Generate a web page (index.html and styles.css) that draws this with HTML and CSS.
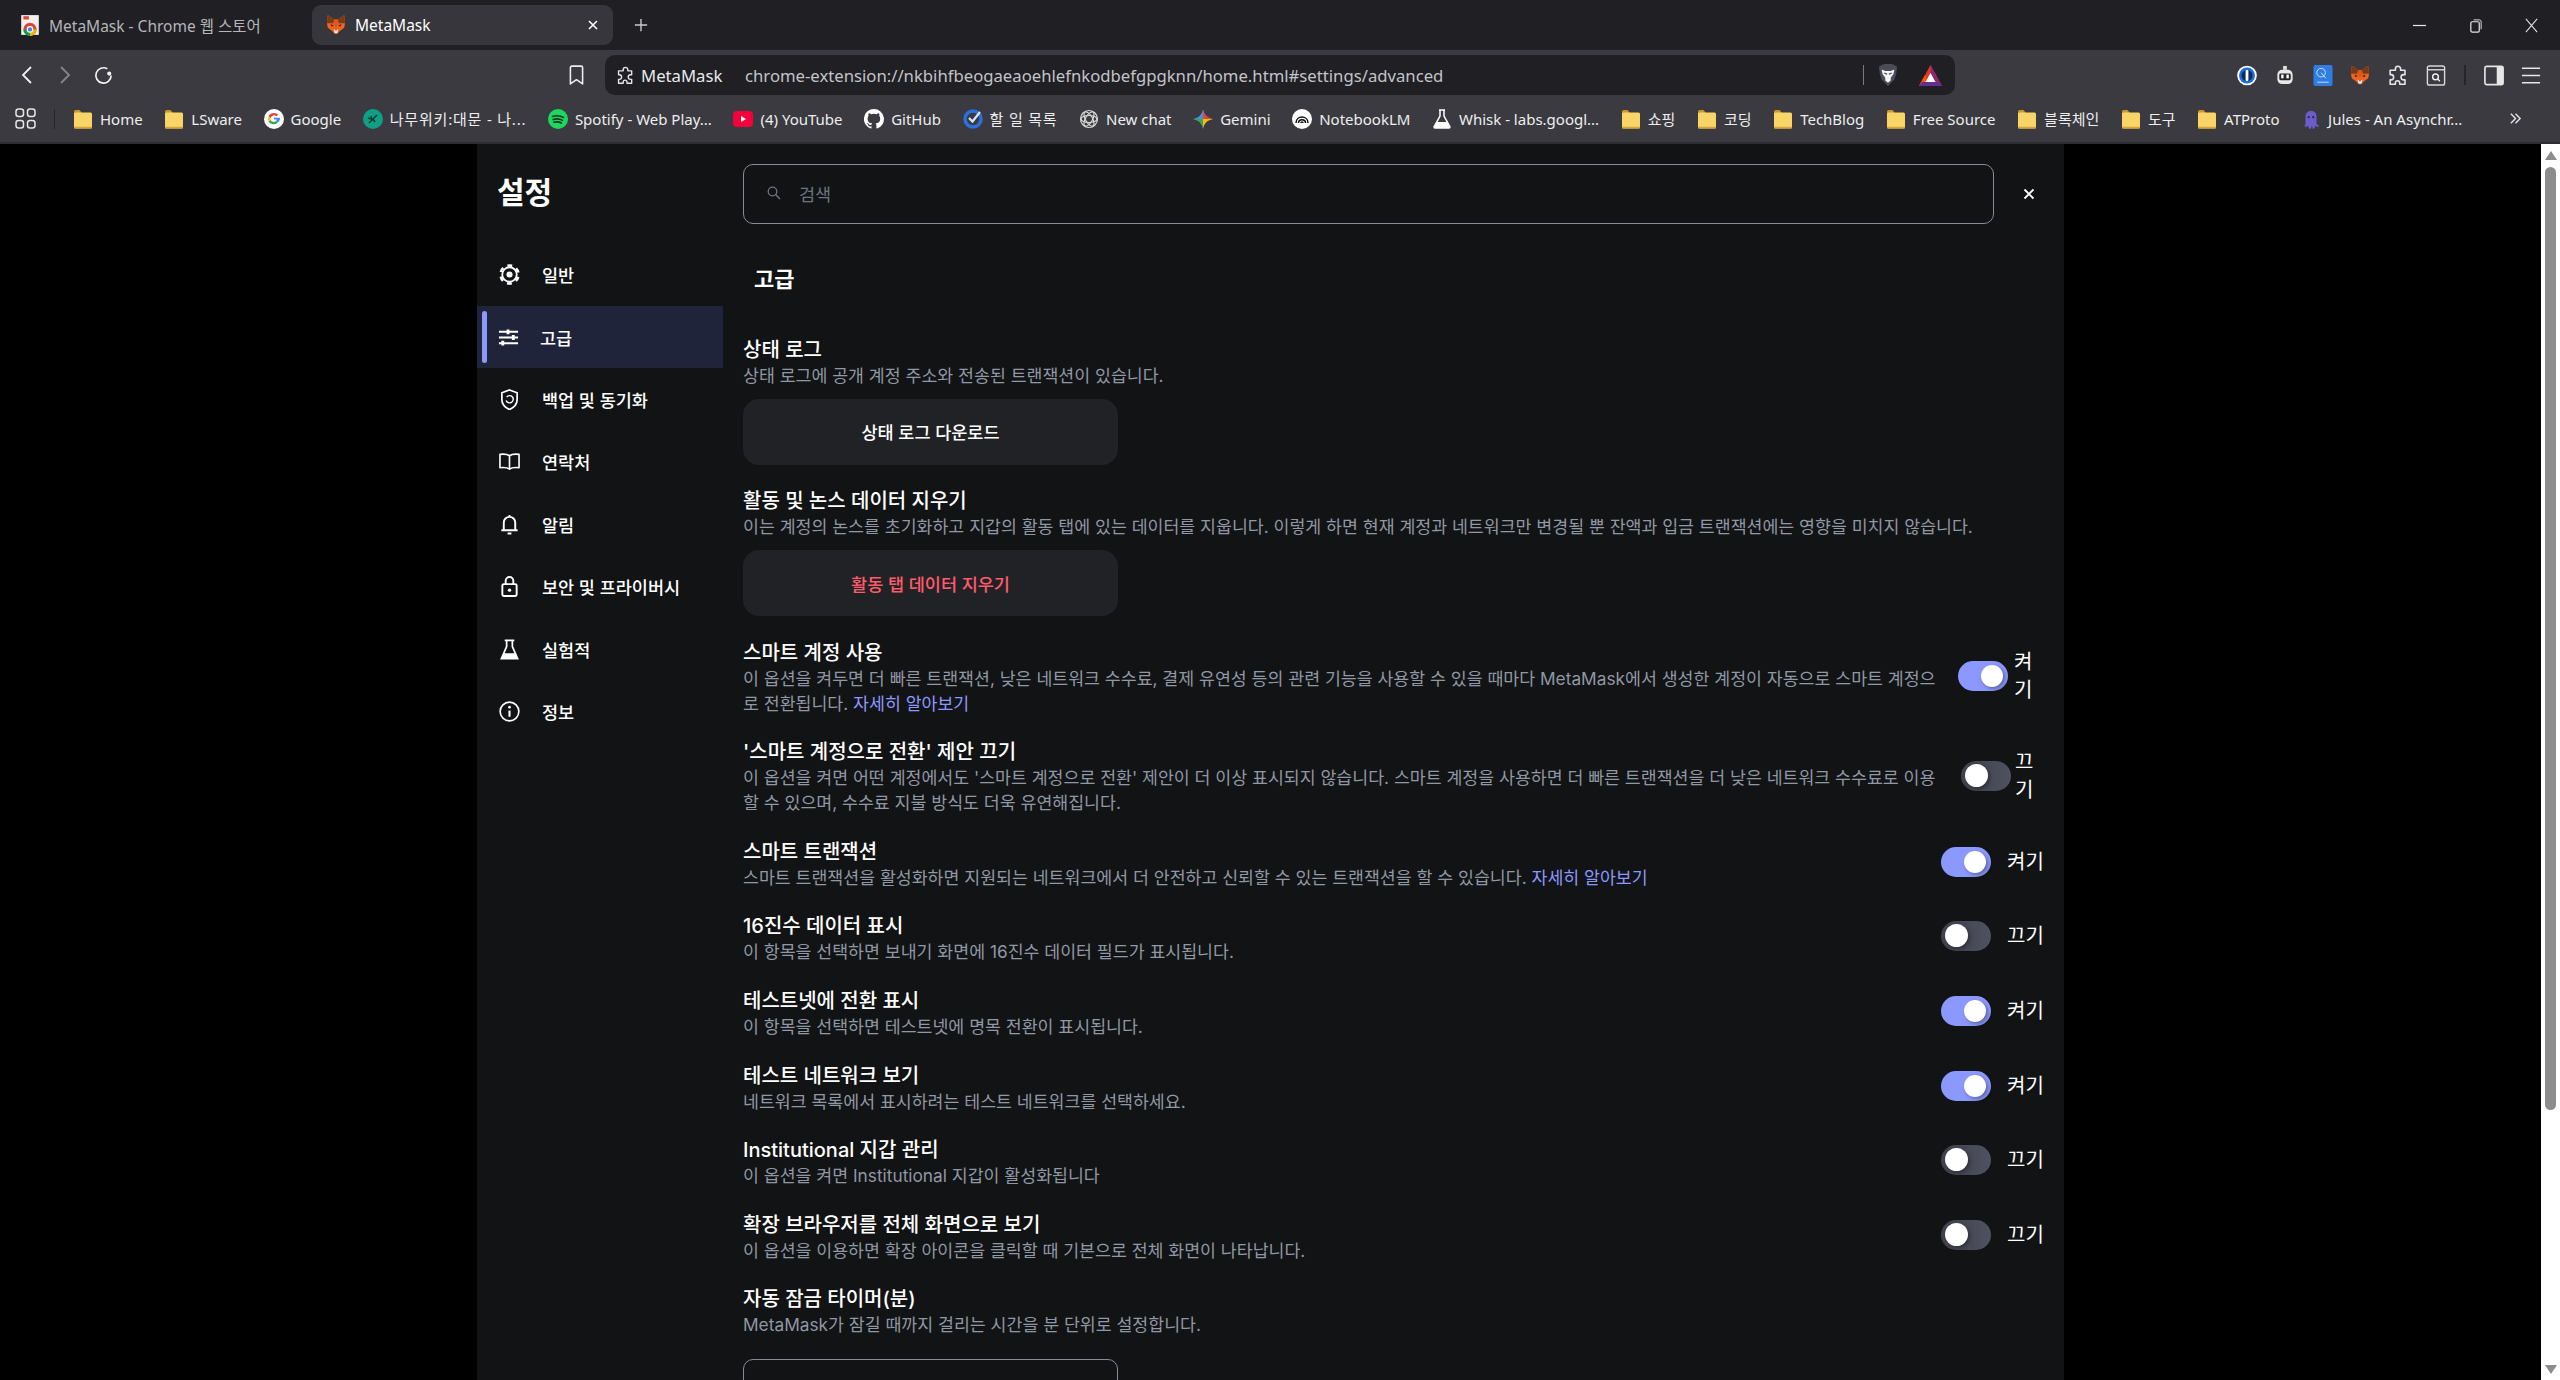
FILE: index.html
```html
<!DOCTYPE html>
<html lang="ko">
<head>
  <meta charset="UTF-8">
  <title>MetaMask</title>
  <link rel="stylesheet" href="styles.css">
</head>
<body>
  <!-- shared icons -->
  <svg class="defs" width="0" height="0">
    <symbol id="folder" viewBox="0 0 20 22">
      <path d="M1 3.5a1.5 1.5 0 0 1 1.5-1.500h4l2 2.500v3h-7.500z" fill="#c9962c"/>
      <rect x="1" y="4.500" width="18" height="16" rx="1.500" fill="#f9d568"/>
      <rect x="1" y="18.800" width="18" height="1.700" rx=".8" fill="#d6a53a"/>
    </symbol>
    <symbol id="fox" viewBox="0 0 22 22">
      <polygon points="2,0 9,5 13,5 20,0 21,9 20,14 15,18 12.500,20.500 9.500,20.500 7,18 2,14 1,9" fill="#f0641e"/>
      <polygon points="2,0 9,5 8,9 1,9" fill="#7a3a14"/>
      <polygon points="20,0 13,5 14,9 21,9" fill="#7a3a14"/>
      <polygon points="9,5 13,5 13.500,11 11,14 8.500,11" fill="#e2561b"/>
      <polygon points="5,10 8.500,11.500 6,13" fill="#2b2b33"/>
      <polygon points="17,10 13.500,11.500 16,13" fill="#2b2b33"/>
      <polygon points="8.500,16 13.500,16 12.500,20 9.500,20" fill="#efe3da"/>
      <polygon points="10,16 12,16 11,17.500" fill="#2b2b33"/>
    </symbol>
    <symbol id="puzzle" viewBox="0 0 22 24">
      <path d="M8 4.500a3 3 0 0 1 6 0V6h5v5h-1.500a3 3 0 0 0 0 6H19v5h-6v-1.500a2.500 2.500 0 0 0-5 0V22H2v-5h1a3 3 0 0 0 0-6H2V6h6z" fill="none" stroke="currentColor" stroke-width="1.800" stroke-linejoin="round"/>
    </symbol>
  </svg>

  <!-- Tab strip -->
  <div class="tabstrip">
    <div class="tab">
      <svg class="favicon" viewBox="0 0 18 20">
        <path d="M1 1h16v18H1z" fill="#f4f1ec"/>
        <path d="M3 2h5v3H3z" fill="#d9483b"/>
        <circle cx="9" cy="14" r="6" fill="#db4437"/>
        <path d="M3 14a6 6 0 0 0 6 6v-6z" fill="#0f9d58"/>
        <path d="M9 20a6 6 0 0 0 6-6H9z" fill="#f4b400"/>
        <circle cx="9" cy="14" r="2.500" fill="#4285f4" stroke="#fff"/>
      </svg>
      <span>MetaMask - Chrome 웹 스토어</span>
    </div>
    <div class="tab tab-active">
      <svg class="favicon"><use href="#fox"/></svg>
      <span>MetaMask</span>
      <svg class="tab-close" viewBox="0 0 10 10"><path d="M1 1l8 8M9 1l-8 8" stroke="#fff" stroke-width="1.600"/></svg>
    </div>
    <svg class="new-tab" viewBox="0 0 16 16"><path d="M8 1v14M1 8h14" stroke="#c9c9cf" stroke-width="1.600"/></svg>
    <div class="win-controls">
      <svg viewBox="0 0 16 16"><path d="M1 8h14" stroke="#e6e6e6" stroke-width="1.300"/></svg>
      <svg viewBox="0 0 16 16"><rect x="3" y="4" width="9" height="11" rx="1.500" fill="none" stroke="#e6e6e6" stroke-width="1.300"/><path d="M6 2h6a2 2 0 0 1 2 2v8" fill="none" stroke="#e6e6e6"/></svg>
      <svg viewBox="0 0 16 16"><path d="M2 1l12 14M14 1L2 15" stroke="#e6e6e6" stroke-width="1.100"/></svg>
    </div>
  </div>

  <!-- Toolbar -->
  <div class="toolbar">
    <div class="nav-btns">
      <svg viewBox="0 0 12 20"><path d="M10 2L2 10l8 8" fill="none" stroke="#f0f0f0" stroke-width="1.800"/></svg>
      <svg viewBox="0 0 12 20"><path d="M2 2l8 8-8 8" fill="none" stroke="#85858b" stroke-width="1.800"/></svg>
      <svg viewBox="0 0 22 22"><path d="M19 11a8 8 0 1 1-4-7" fill="none" stroke="#f0f0f0" stroke-width="1.800"/><circle cx="17" cy="9" r="2.200" fill="#f0f0f0"/></svg>
    </div>
    <svg class="bookmark-star" viewBox="0 0 16 22"><path d="M1.500 2.500a1.500 1.500 0 0 1 1.500-1.500h10a1.500 1.500 0 0 1 1.500 1.500V20L8 15.500 1.500 20z" fill="none" stroke="#ececec" stroke-width="1.700" stroke-linejoin="round"/></svg>
    <div class="omnibox">
      <svg class="omni-puzzle"><use href="#puzzle"/></svg>
      <span class="omni-name">MetaMask</span>
      <span class="omni-url">chrome-extension://nkbihfbeogaeaoehlefnkodbefgpgknn/home.html#settings/advanced</span>
      <span class="omni-sep"></span>
      <svg class="omni-lion" viewBox="0 0 22 24">
        <path d="M4 1l3-1h8l3 1 3 2-1 8-2 6-7 7-7-7-2-6-1-8z" fill="#4a4d57"/>
        <path d="M4 6l4 1.500h6l4-1.500-1 5-3 4v3l-3 2.500-3-2.500v-3l-3-4z" fill="#f4f4f4"/>
        <path d="M7 10l3 1M15 10l-3 1" stroke="#4a4d57" stroke-width="1.300"/>
      </svg>
      <svg class="omni-bat" viewBox="0 0 23 21">
        <path d="M11.500 0L23 21H0z" fill="#e2382c"/>
        <path d="M11.500 0L23 21H11.500z" fill="#8a2a6a"/>
        <path d="M0 21l6-11 5.500 11z" fill="#ff5500"/>
        <path d="M3 17h17l3 4H0z" fill="#662d91"/>
        <path d="M11.500 8l5 9h-10z" fill="#fff"/>
      </svg>
    </div>
    <div class="ext-icons">
      <svg viewBox="0 0 20 20"><circle cx="10" cy="10" r="9.800" fill="#fff"/><circle cx="10" cy="10" r="8" fill="#1a6fe0"/><circle cx="10" cy="10" r="5.500" fill="#0a2a66"/><rect x="8.600" y="4.500" width="2.800" height="11" rx="1" fill="#fff"/></svg>
      <svg viewBox="0 0 20 22"><path d="M8 1h4v4H8z" fill="#ddd"/><rect x="2" y="5" width="16" height="15" rx="5" fill="#e8e8e8"/><rect x="4" y="9" width="12" height="7" rx="1.500" fill="#26262a"/><rect x="6" y="10" width="2.500" height="4" fill="#fff"/><rect x="11.500" y="10" width="2.500" height="4" fill="#fff"/></svg>
      <svg viewBox="0 0 20 22"><rect x="0" y="0" width="20" height="22" rx="2" fill="#2f7de1"/><circle cx="8" cy="8" r="4.500" fill="none" stroke="#cfe2fb"/><path d="M8 8l5 6" stroke="#cfe2fb"/><path d="M4 18h12" stroke="#cfe2fb"/></svg>
      <svg viewBox="0 0 22 22"><use href="#fox"/></svg>
      <svg class="ext-puzzle"><use href="#puzzle"/></svg>
      <svg viewBox="0 0 20 22"><rect x="1" y="1" width="18" height="20" rx="2" fill="none" stroke="#d8d8d8" stroke-width="1.500"/><path d="M1 5h18" stroke="#d8d8d8" stroke-width="1.500"/><circle cx="9.500" cy="12.500" r="3" fill="none" stroke="#eee" stroke-width="1.500"/><path d="M11.500 14.500l2.500 2.500" stroke="#eee" stroke-width="1.500"/></svg>
      <span class="ext-sep"></span>
      <svg viewBox="0 0 22 22"><rect x="1" y="1" width="20" height="20" rx="2" fill="none" stroke="#e6e6e6" stroke-width="1.800"/><rect x="14" y="1" width="7" height="20" fill="#e6e6e6"/></svg>
      <svg viewBox="0 0 22 22"><path d="M1 3h20M1 11h20M1 19h20" stroke="#e6e6e6" stroke-width="1.700"/></svg>
    </div>
  </div>

  <!-- Bookmarks bar -->
  <div class="bookmarks">
    <svg class="apps" viewBox="0 0 21 21"><g fill="none" stroke="#e6e6e6" stroke-width="1.500"><rect x="1" y="1" width="7.500" height="7.500" rx="2.500"/><rect x="12.500" y="1" width="7.500" height="7.500" rx="2.500"/><rect x="1" y="12.500" width="7.500" height="7.500" rx="2.500"/><rect x="12.500" y="12.500" width="7.500" height="7.500" rx="2.500"/></g></svg>
    <span class="bm-sep"></span>
    <div class="bm"><svg><use href="#folder"/></svg>Home</div>
    <div class="bm"><svg><use href="#folder"/></svg>LSware</div>
    <div class="bm">
      <svg viewBox="0 0 20 20"><circle cx="10" cy="10" r="10" fill="#fff"/><path d="M10 4a6 6 0 0 1 4.200 1.600l-1.700 1.700A3.600 3.600 0 0 0 6.600 9L4.600 7.300A6 6 0 0 1 10 4z" fill="#ea4335"/><path d="M4.600 7.300L6.600 9a3.600 3.600 0 0 0 0 2.100l-2 1.600a6 6 0 0 1 0-5.400z" fill="#fbbc05"/><path d="M4.600 12.700l2-1.600A3.600 3.600 0 0 0 12 12l1.900 1.500A6 6 0 0 1 4.600 12.700z" fill="#34a853"/><path d="M16 10.300a6 6 0 0 1-2.100 3.200L12 12a2.800 2.800 0 0 0 1-1.500h-3V8.700h5.800c.1.500.2 1 .2 1.600z" fill="#4285f4"/></svg>
      Google
    </div>
    <div class="bm bm-ko">
      <svg viewBox="0 0 20 20"><circle cx="10" cy="10" r="10" fill="#0e9f85"/><path d="M6 14l8-8M8 7l1 4M12 13l-2-3M5 9l3 1" stroke="#0b3d33" stroke-width="1.500" fill="none"/></svg>
      나무위키:대문 - 나...
    </div>
    <div class="bm">
      <svg viewBox="0 0 20 20"><circle cx="10" cy="10" r="10" fill="#1ed760"/><path d="M4.500 7.500c4-1.200 8-.8 11 1M5.200 10.500c3.300-1 6.700-.6 9.300 .9M6 13.200c2.800-.7 5.300-.4 7.500 .8" fill="none" stroke="#14351f" stroke-width="1.600" stroke-linecap="round"/></svg>
      Spotify - Web Play...
    </div>
    <div class="bm">
      <svg viewBox="0 0 20 20"><rect y="2" width="20" height="16" rx="4" fill="#f5003c"/><path d="M8 7l5 3-5 3z" fill="#fff"/></svg>
      (4) YouTube
    </div>
    <div class="bm">
      <svg viewBox="0 0 20 20"><path d="M10 0a10 10 0 0 0-3.200 19.500c.5.100.7-.2.700-.5v-1.700c-2.800.6-3.400-1.300-3.400-1.300-.4-1.200-1.100-1.500-1.100-1.500-.9-.6.100-.6.100-.6 1 .1 1.500 1 1.500 1 .9 1.500 2.300 1.100 2.900.8.100-.6.300-1.100.6-1.300-2.200-.3-4.500-1.100-4.500-4.900 0-1.100.4-2 1-2.700-.1-.3-.4-1.300.1-2.600 0 0 .8-.3 2.700 1a9.400 9.400 0 0 1 5 0c1.900-1.300 2.700-1 2.700-1 .5 1.300.2 2.300.1 2.600.6.700 1 1.600 1 2.700 0 3.800-2.300 4.600-4.500 4.900.4.300.7.900.7 1.800V19c0 .3.200.6.700.5A10 10 0 0 0 10 0z" fill="#fff"/></svg>
      GitHub
    </div>
    <div class="bm bm-ko">
      <svg viewBox="0 0 20 22"><circle cx="10" cy="11" r="8" fill="none" stroke="#2a6fdc" stroke-width="3.500"/><path d="M6 10l3.500 3.500L17 4" fill="none" stroke="#d8e6fa" stroke-width="2.200"/></svg>
      할 일 목록
    </div>
    <div class="bm">
      <svg viewBox="0 0 20 20"><g fill="none" stroke="#d9d9d9" stroke-width="1.200"><circle cx="10" cy="10" r="8.500"/><ellipse cx="10" cy="10" rx="8" ry="3.500"/><ellipse cx="10" cy="10" rx="8" ry="3.500" transform="rotate(60 10 10)"/><ellipse cx="10" cy="10" rx="8" ry="3.500" transform="rotate(120 10 10)"/></g></svg>
      New chat
    </div>
    <div class="bm">
      <svg viewBox="0 0 20 20"><path d="M10 0c.8 5.500 4.500 9.200 10 10-5.500.8-9.200 4.500-10 10-.8-5.500-4.500-9.200-10-10 5.500-.8 9.200-4.500 10-10z" fill="#4a90e2"/><path d="M10 0c.8 5.500 4.500 9.200 10 10H10z" fill="#ea4335"/><path d="M0 10c5.500.8 9.200 4.500 10 10V10z" fill="#34a853"/><path d="M10 20c.8-5.500 4.500-9.200 10-10H10z" fill="#fbbc05"/></svg>
      Gemini
    </div>
    <div class="bm">
      <svg viewBox="0 0 20 20"><circle cx="10" cy="10" r="10" fill="#fff"/><path d="M4 14c0-8 12-8 12 0M6.500 14c0-4.500 7-4.500 7 0M9 14c0-1.500 2-1.500 2 0" fill="none" stroke="#111" stroke-width="1.500"/></svg>
      NotebookLM
    </div>
    <div class="bm">
      <svg viewBox="0 0 20 20"><path d="M7 1h6M8 1v6L2 18a1 1 0 0 0 1 1h14a1 1 0 0 0 1-1L12 7V1" fill="none" stroke="#fff" stroke-width="1.500"/><path d="M5 13h10l3 6H2z" fill="#fff"/></svg>
      Whisk - labs.googl...
    </div>
    <div class="bm"><svg><use href="#folder"/></svg>쇼핑</div>
    <div class="bm"><svg><use href="#folder"/></svg>코딩</div>
    <div class="bm"><svg><use href="#folder"/></svg>TechBlog</div>
    <div class="bm"><svg><use href="#folder"/></svg>Free Source</div>
    <div class="bm"><svg><use href="#folder"/></svg>블록체인</div>
    <div class="bm"><svg><use href="#folder"/></svg>도구</div>
    <div class="bm"><svg><use href="#folder"/></svg>ATProto</div>
    <div class="bm">
      <svg viewBox="0 0 20 24"><path d="M4 9a6 6 0 0 1 12 0v7c0 2 1.500 3 3 3-1 2-3.500 2-4.500 0 0 2-1 4-2 4s-1-2-1.500-4c-.5 2-1 4-2 4s-2-2-2-4c-1 2-3.500 2-4.500 0 1.500 0 1.500-1 1.500-3z" fill="#6b5cc9"/><circle cx="7.500" cy="10" r="1.200" fill="#2a2550"/><circle cx="12.500" cy="10" r="1.200" fill="#2a2550"/></svg>
      Jules - An Asynchr...
    </div>
    <svg class="bm-more" viewBox="0 0 14 14"><path d="M2 2l5 5-5 5M7 2l5 5-5 5" fill="none" stroke="#e6e6e6" stroke-width="1.500"/></svg>
  </div>

  <!-- Extension page -->
  <div class="viewport">
    <div class="page">
      <aside class="sidebar">
        <h1 class="side-title">설정</h1>
        <nav>
          <div class="nav-item">
            <svg viewBox="0 0 22 22"><circle cx="11" cy="11" r="9.500" fill="none" stroke="#fff" stroke-width="2.600" stroke-dasharray="5 4.950" transform="rotate(15 11 11)"/><circle cx="11" cy="11" r="7.600" fill="none" stroke="#fff" stroke-width="1.900"/><circle cx="11" cy="11" r="3.200" fill="#fff"/></svg>
            <span>일반</span>
          </div>
          <div class="nav-item nav-active">
            <svg viewBox="0 0 22 22"><path d="M1 5h20M1 11h20M1 17h20" stroke="#fff" stroke-width="2"/><path d="M10.500 2.500v5M16 8.500v5M5 14.500v5" stroke="#fff" stroke-width="3"/></svg>
            <span>고급</span>
          </div>
          <div class="nav-item">
            <svg viewBox="0 0 22 22"><path d="M11 1l8 3v7c0 5-3.500 8.500-8 10.500C6.500 19.500 3 16 3 11V4z" fill="none" stroke="#fff" stroke-width="1.800"/><path d="M8 8.500A3.800 3.800 0 1 1 7.500 12" fill="none" stroke="#fff" stroke-width="1.500"/></svg>
            <span>백업 및 동기화</span>
          </div>
          <div class="nav-item">
            <svg viewBox="0 0 22 22"><path d="M11 5C9 3.500 5 3 1 3.500v14c4-.5 8 0 10 1.500 2-1.500 6-2 10-1.500v-14C17 3 13 3.500 11 5zM11 5v14" fill="none" stroke="#fff" stroke-width="1.700" stroke-linejoin="round"/></svg>
            <span>연락처</span>
          </div>
          <div class="nav-item">
            <svg viewBox="0 0 22 22"><path d="M11 1v2M5 17V9a6 6 0 0 1 12 0v8zM2.500 17h17M9 20.500h4" fill="none" stroke="#fff" stroke-width="2"/></svg>
            <span>알림</span>
          </div>
          <div class="nav-item">
            <svg viewBox="0 0 22 22"><rect x="3.500" y="8.500" width="15" height="12.500" rx="1.500" fill="none" stroke="#fff" stroke-width="2"/><path d="M7 8.500V5a4 4 0 0 1 8 0v3.500" fill="none" stroke="#fff" stroke-width="2"/><circle cx="11" cy="14.800" r="1.800" fill="#fff"/></svg>
            <span>보안 및 프라이버시</span>
          </div>
          <div class="nav-item">
            <svg viewBox="0 0 22 22"><path d="M6 1.500h10M8 1.500V8L2.500 20.500h17L14 8V1.500" fill="none" stroke="#fff" stroke-width="1.800"/><path d="M5 15h12l2.500 5.500h-17z" fill="#fff"/></svg>
            <span>실험적</span>
          </div>
          <div class="nav-item">
            <svg viewBox="0 0 22 22"><circle cx="11" cy="11" r="9.800" fill="none" stroke="#fff" stroke-width="1.700"/><path d="M11 10v6.500" stroke="#fff" stroke-width="2.200"/><circle cx="11" cy="6.500" r="1.400" fill="#fff"/></svg>
            <span>정보</span>
          </div>
        </nav>
      </aside>

      <main class="content">
        <div class="search-row">
          <div class="search">
            <svg viewBox="0 0 14 14"><circle cx="5.500" cy="5.500" r="4.300" fill="none" stroke="#6e7380" stroke-width="1.300"/><path d="M8.800 8.800L13 13" stroke="#6e7380" stroke-width="1.500"/></svg>
            <span>검색</span>
          </div>
          <svg class="search-close" viewBox="0 0 12 12"><path d="M1.500 1.500l9 9M10.500 1.500l-9 9" stroke="#fff" stroke-width="1.800"/></svg>
        </div>
        <h2 class="section-title">고급</h2>

        <section class="row">
          <div class="row-text">
            <h3>상태 로그</h3>
            <p>상태 로그에 공개 계정 주소와 전송된 트랜잭션이 있습니다.</p>
            <button class="action">상태 로그 다운로드</button>
          </div>
        </section>
        <section class="row">
          <div class="row-text">
            <h3>활동 및 논스 데이터 지우기</h3>
            <p>이는 계정의 논스를 초기화하고 지갑의 활동 탭에 있는 데이터를 지웁니다. 이렇게 하면 현재 계정과 네트워크만 변경될 뿐 잔액과 입금 트랜잭션에는 영향을 미치지 않습니다.</p>
            <button class="action action-danger">활동 탭 데이터 지우기</button>
          </div>
        </section>
        <section class="row">
          <div class="row-text">
            <h3>스마트 계정 사용</h3>
            <p>이 옵션을 켜두면 더 빠른 트랜잭션, 낮은 네트워크 수수료, 결제 유연성 등의 관련 기능을 사용할 수 있을 때마다 MetaMask에서 생성한 계정이 자동으로 스마트 계정으로 전환됩니다. <a href="#">자세히 알아보기</a></p>
          </div>
          <div class="toggle-wrap wrap-on"><span class="toggle on"></span><span class="toggle-label">켜기</span></div>
        </section>
        <section class="row">
          <div class="row-text">
            <h3>'스마트 계정으로 전환' 제안 끄기</h3>
            <p>이 옵션을 켜면 어떤 계정에서도 '스마트 계정으로 전환' 제안이 더 이상 표시되지 않습니다. 스마트 계정을 사용하면 더 빠른 트랜잭션을 더 낮은 네트워크 수수료로 이용할 수 있으며, 수수료 지불 방식도 더욱 유연해집니다.</p>
          </div>
          <div class="toggle-wrap wrap-off"><span class="toggle"></span><span class="toggle-label">끄기</span></div>
        </section>
        <section class="row">
          <div class="row-text">
            <h3>스마트 트랜잭션</h3>
            <p>스마트 트랜잭션을 활성화하면 지원되는 네트워크에서 더 안전하고 신뢰할 수 있는 트랜잭션을 할 수 있습니다. <a href="#">자세히 알아보기</a></p>
          </div>
          <div class="toggle-wrap"><span class="toggle on"></span><span class="toggle-label">켜기</span></div>
        </section>
        <section class="row">
          <div class="row-text">
            <h3>16진수 데이터 표시</h3>
            <p>이 항목을 선택하면 보내기 화면에 16진수 데이터 필드가 표시됩니다.</p>
          </div>
          <div class="toggle-wrap"><span class="toggle"></span><span class="toggle-label">끄기</span></div>
        </section>
        <section class="row">
          <div class="row-text">
            <h3>테스트넷에 전환 표시</h3>
            <p>이 항목을 선택하면 테스트넷에 명목 전환이 표시됩니다.</p>
          </div>
          <div class="toggle-wrap"><span class="toggle on"></span><span class="toggle-label">켜기</span></div>
        </section>
        <section class="row">
          <div class="row-text">
            <h3>테스트 네트워크 보기</h3>
            <p>네트워크 목록에서 표시하려는 테스트 네트워크를 선택하세요.</p>
          </div>
          <div class="toggle-wrap"><span class="toggle on"></span><span class="toggle-label">켜기</span></div>
        </section>
        <section class="row">
          <div class="row-text">
            <h3>Institutional 지갑 관리</h3>
            <p>이 옵션을 켜면 Institutional 지갑이 활성화됩니다</p>
          </div>
          <div class="toggle-wrap"><span class="toggle"></span><span class="toggle-label">끄기</span></div>
        </section>
        <section class="row">
          <div class="row-text">
            <h3>확장 브라우저를 전체 화면으로 보기</h3>
            <p>이 옵션을 이용하면 확장 아이콘을 클릭할 때 기본으로 전체 화면이 나타납니다.</p>
          </div>
          <div class="toggle-wrap"><span class="toggle"></span><span class="toggle-label">끄기</span></div>
        </section>
        <section class="row">
          <div class="row-text">
            <h3>자동 잠금 타이머(분)</h3>
            <p>MetaMask가 잠길 때까지 걸리는 시간을 분 단위로 설정합니다.</p>
            <div class="number-input"></div>
          </div>
        </section>
      </main>
    </div>

    <div class="scrollbar">
      <span class="arrow-up"></span>
      <span class="thumb"></span>
      <span class="arrow-down"></span>
    </div>
  </div>
</body>
</html>
```

FILE: styles.css
```css
/* Global */
* {
  box-sizing: border-box;
}
html, body {
  height: 100%;
}
body {
  margin: 0;
  display: flex;
  flex-direction: column;
  overflow: hidden;
  background: #000;
  color: #fff;
  font-family: Inter, "Noto Sans CJK KR", sans-serif;
}
.defs {
  position: absolute;
}

/* Tab strip */
.tabstrip {
  height: 50px;
  flex: none;
  display: flex;
  align-items: center;
  background: #1f1f24;
  font-family: "Noto Sans", "Noto Sans CJK KR", sans-serif;
  font-size: 15.5px;
}
.tab {
  width: 312px;
  height: 40px;
  display: flex;
  align-items: center;
  padding-left: 20px;
  color: #b5b5ba;
  white-space: nowrap;
}
.tab-active {
  width: 301px;
  padding-left: 14px;
  background: #36363c;
  border-radius: 9px;
  color: #fff;
  position: relative;
}
.favicon {
  width: 20px;
  height: 22px;
  margin-right: 9px;
}
.tab-close {
  position: absolute;
  right: 15px;
  top: 15px;
  width: 10px;
  height: 10px;
}
.new-tab {
  width: 14px;
  height: 14px;
  margin-left: 21px;
}
.win-controls {
  margin-left: auto;
  display: flex;
  gap: 41px;
  padding-right: 21px;
}
.win-controls svg {
  width: 15px;
  height: 15px;
}

/* Toolbar */
.toolbar {
  height: 45px;
  flex: none;
  display: flex;
  align-items: flex-end;
  background: #3a3a40;
  padding-left: 21px;
}
.nav-btns {
  width: 548px;
  height: 40px;
  display: flex;
  align-items: center;
  gap: 26px;
}
.nav-btns svg {
  width: 12px;
  height: 20px;
}
.nav-btns svg:last-child {
  width: 21px;
  height: 21px;
  margin-left: -4px;
}
.bookmark-star {
  width: 15px;
  height: 21px;
  align-self: center;
  margin-top: 5px;
}
.omnibox {
  width: 1350px;
  height: 40px;
  margin-left: 21px;
  display: flex;
  align-items: center;
  background: #1f1f24;
  border-radius: 10px;
  padding-left: 12px;
  font-family: "Noto Sans", sans-serif;
  font-size: 16.7px;
}
.omni-puzzle {
  width: 17px;
  height: 19px;
  color: #e6e6e6;
  margin-right: 7px;
}
.omni-name {
  width: 104px;
  color: #e9e9ec;
}
.omni-url {
  width: 1118px;
  color: #c3c3c8;
  white-space: nowrap;
}
.omni-sep {
  width: 1px;
  height: 20px;
  background: #7a7a80;
}
.omni-lion {
  width: 20px;
  height: 22px;
  margin-left: 14px;
}
.omni-bat {
  width: 23px;
  height: 21px;
  margin-left: 21px;
}
.ext-icons {
  height: 40px;
  display: flex;
  align-items: center;
  margin-left: 282px;
  gap: 17.8px;
}
.ext-icons svg {
  width: 20px;
  height: 21px;
}
.ext-puzzle {
  color: #e6e6e6;
}
.ext-sep {
  width: 2px;
  height: 20px;
  background: #26262a;
}

/* Bookmarks bar */
.bookmarks {
  height: 49px;
  flex: none;
  display: flex;
  align-items: center;
  background: #3a3a40;
  border-bottom: 2px solid #2c2c31;
  padding-left: 15px;
  font-family: "Noto Sans", "Noto Sans CJK KR", sans-serif;
  font-size: 15px;
  color: #eee;
  white-space: nowrap;
  position: relative;
}
.apps {
  width: 21px;
  height: 21px;
}
.bm-sep {
  width: 1px;
  height: 20px;
  background: #26262a;
  margin: 0 18px;
}
.bm {
  display: flex;
  align-items: center;
  gap: 7px;
  margin-right: 21.6px;
}
.bm-ko {
  letter-spacing: .8px;
}
.bm svg {
  width: 20px;
  height: 22px;
  flex: none;
}
.bm-more {
  width: 13px;
  height: 13px;
  position: absolute;
  left: 2509px;
  top: 17px;
}

/* Page */
.viewport {
  flex: 1;
  min-height: 0;
  display: flex;
}
.page {
  flex: 1;
  display: flex;
  justify-content: center;
  overflow: hidden;
}
.sidebar {
  width: 246px;
  flex: none;
  background: #121314;
}
.side-title {
  margin: 0;
  height: 99.5px;
  padding: 28px 0 0 20px;
  font-size: 30px;
  line-height: 40px;
  font-weight: 700;
}
.nav-item {
  height: 62.4px;
  display: flex;
  align-items: center;
  padding-left: 22px;
  gap: 22px;
  font-size: 17.5px;
  font-weight: 500;
  color: #fff;
  position: relative;
}
.nav-item svg {
  width: 21px;
  height: 21px;
  flex: none;
}
.nav-active {
  background: #20243a;
  padding-left: 21px;
  gap: 21px;
}
.nav-active::before {
  content: "";
  position: absolute;
  left: 5px;
  top: 5px;
  bottom: 5px;
  width: 5px;
  border-radius: 3px;
  background: #8b99ff;
}

/* Content */
.content {
  width: 1341px;
  flex: none;
  background: #121314;
  padding: 20px 20px 0 20px;
}
.search-row {
  display: flex;
  align-items: center;
  gap: 29px;
}
.search {
  width: 1251px;
  height: 60px;
  display: flex;
  align-items: center;
  border: 1px solid #858b9a;
  border-radius: 10px;
  padding: 0 0 2px 23px;
  gap: 18px;
  font-size: 17.5px;
  color: #6e7380;
}
.search svg {
  width: 14px;
  height: 14px;
}
.search-close {
  width: 12px;
  height: 12px;
}
.section-title {
  margin: 40px 0 39.5px 11px;
  font-size: 22px;
  line-height: 30px;
  font-weight: 700;
}
.row {
  display: flex;
  margin-bottom: 20.6px;
}
.row-text {
  flex: 1;
  min-width: 0;
}
.row-text h3 {
  margin: 0;
  padding-top: 3px;
  font-size: 20px;
  line-height: 26px;
  font-weight: 500;
}
.row-text p {
  margin: 0;
  font-size: 17.3px;
  line-height: 25px;
  color: #9097a5;
}
.row-text a {
  color: #8b99ff;
  text-decoration: none;
}
.action {
  display: block;
  width: 375px;
  height: 66px;
  margin-top: 11px;
  border: 0;
  border-radius: 16px;
  background: #212226;
  color: #fff;
  font-family: inherit;
  font-size: 17.5px;
  font-weight: 500;
}
.action-danger {
  color: #ff5c6b;
}
.number-input {
  width: 375px;
  height: 60px;
  margin-top: 22px;
  border: 1px solid #858b9a;
  border-radius: 10px;
}

/* Toggles */
.toggle-wrap {
  width: 103px;
  flex: none;
  display: flex;
  align-items: center;
  gap: 16px;
  margin-left: 24px;
  height: 52px;
}
.wrap-on {
  width: 86px;
  gap: 6px;
  height: 79px;
  margin-left: 16px;
}
.wrap-off {
  width: 83px;
  gap: 4px;
  height: 79px;
}
.toggle {
  width: 50px;
  height: 30px;
  flex: none;
  border-radius: 15px;
  background: linear-gradient(90deg, #3f424d, #4e515e);
  position: relative;
}
.toggle::after {
  content: "";
  position: absolute;
  left: 4px;
  top: 3px;
  width: 23px;
  height: 23px;
  border-radius: 50%;
  background: #fff;
  box-shadow: 2px 2px 4px rgba(0,0,0,.35);
}
.toggle.on {
  background: #8b99ff;
}
.toggle.on::after {
  left: 23px;
  width: 22px;
  height: 22px;
  top: 4px;
}
.toggle-label {
  font-size: 20px;
  line-height: 28px;
  white-space: nowrap;
}
.wrap-on .toggle-label, .wrap-off .toggle-label {
  width: 30px;
  white-space: normal;
}

/* Scrollbar */
.scrollbar {
  width: 19px;
  flex: none;
  background: #fff;
  display: flex;
  flex-direction: column;
  align-items: center;
  padding-top: 7px;
}
.arrow-up, .arrow-down {
  width: 0;
  height: 0;
  border-left: 6px solid transparent;
  border-right: 6px solid transparent;
}
.arrow-up {
  border-bottom: 9px solid #8c8c8c;
}
.thumb {
  width: 11px;
  height: 943px;
  margin: 7px 0 auto;
  border-radius: 6px;
  background: #8c8c8c;
}
.arrow-down {
  border-top: 9px solid #8c8c8c;
  margin-bottom: 6px;
}
```
